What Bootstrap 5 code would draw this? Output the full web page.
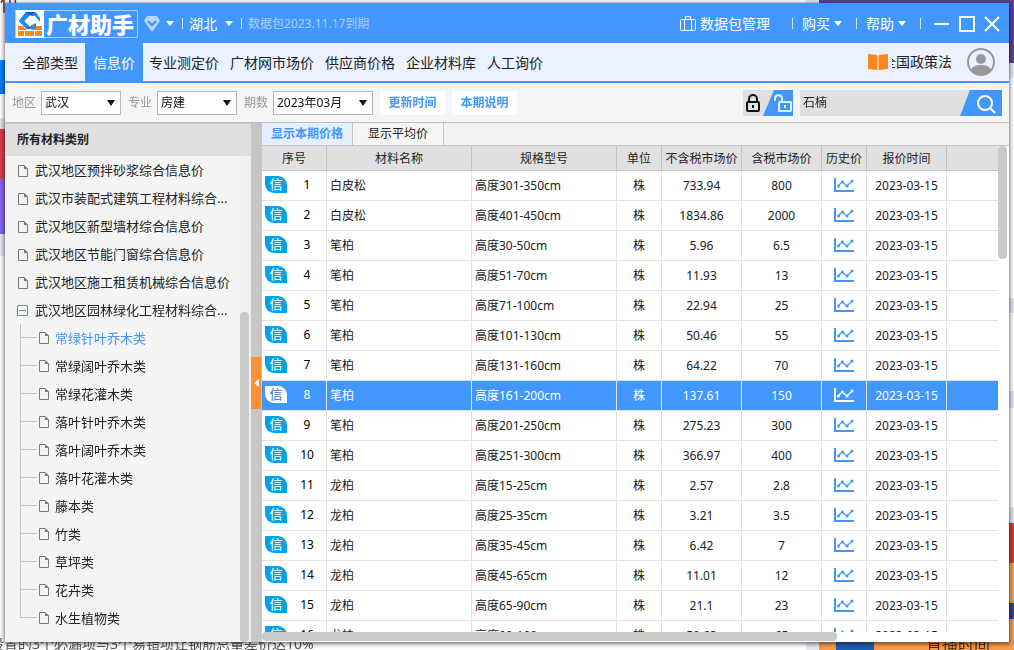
<!DOCTYPE html>
<html lang="zh-CN">
<head>
<meta charset="utf-8">
<meta name="viewport" content="width=device-width, initial-scale=1">
<title>广材助手</title>
<link href="https://cdn.jsdelivr.net/npm/bootstrap@5.3.0/dist/css/bootstrap.min.css" rel="stylesheet">
<script src="https://cdn.jsdelivr.net/npm/bootstrap@5.3.0/dist/js/bootstrap.bundle.min.js"></script>
<style>
:root{--blue:#4297ff;--line:#c4c4c4}
body{font-family:"Noto Sans","Noto Sans CJK SC",sans-serif;font-size:12px;line-height:18px;color:#222;background:#fff}
a{color:inherit;text-decoration:none}
button{border:0;background:none;padding:0;color:inherit}
/* page behind the window */
.desk{position:fixed;inset:0;overflow:hidden;z-index:0}
.desk>*{position:absolute;white-space:nowrap}
.shell{position:relative;z-index:1;height:100vh;padding:3px 5px 8px}
.win{background:#f5f5f5;box-shadow:0 1px 4px 1px rgba(0,0,0,.55)}
.titlebar{height:40px;background:var(--blue);color:#fff;font-size:14px;padding:1px 9px 0 10px}
.logo{height:28px;border:1px solid #a5cdff;font-size:22px;line-height:26px;font-weight:900;padding-right:3px}
.tri{display:inline-block;border:4px solid transparent;border-top:5px solid #fff;border-bottom:0}
.vbar{width:1px;height:11px;background:#d5e7ff}
.titlebar .start{gap:6px}
.titlebar .start .vbar{margin:0 0 0 2px}
.titlebar .end .vbar{margin:0 9px 0 14px}
.expiry{font-size:12px;color:#a9d0ff}
.tabsbar{height:40px;flex:none;background:#ebf1ff;border-bottom:2px solid var(--blue);font-size:14px;padding-left:9px}
.tabsbar .nav{gap:0 11px}
.tabsbar .nav-link{color:#222;padding:2px 0 0;line-height:38px}
.tabsbar .nav-link.active{background:var(--blue);color:#fff;padding:2px 8px 0;margin:0 -5px 0 -4px}
.policy{width:60px}
.avatar{margin:0 14px 0 15px}
.filters{height:39px;flex:none;padding:0 7px}
.filters label{color:#999;width:29px;flex:none}
.filters{column-gap:7px}
.filters label+.form-select{margin-left:-7px}
.filters .form-select{width:80px;border:1px solid #b9b9b9;border-radius:0;height:24px;font-size:12px;line-height:18px;padding:2px 16px 2px 3px;color:#111;background:#fff url("data:image/svg+xml,%3Csvg xmlns='http://www.w3.org/2000/svg' width='8' height='6'%3E%3Cpath d='M0 0h8L4 6z' fill='%23111'/%3E%3C/svg%3E") no-repeat right 5px center;background-size:8px 6px}
.filters .form-select.wide{width:100px}
.lite{background:#fff;color:var(--blue);font-weight:700;height:24px;width:65px}
.filters .lite:hover{background:#e4efff}
.locks{width:50px;height:26px}
.seek{width:202px;height:26px;background:#e0e0e0}
.seek input{border:0;background:none;width:158px;padding:0 3px;color:#222}
.split-body{border-top:1px solid #bdbdbd;min-height:0}
.side{width:246px;flex:none;background:#f4f4f4;border-top:1px solid #d0d0d0}
.side h2{font-size:12px;line-height:32px;font-weight:700;background:#e0e0e0;padding-left:12px;margin:0}
.tree{font-size:13px;line-height:28px;list-style:none;margin:0;padding:0 0 0 12px;white-space:nowrap}
.tree ul{list-style:none;margin:0;padding:0 0 0 3px}
.tree a{display:flex;align-items:center;gap:7px;height:28px}
.tree .leaf{margin:2px 0 0 1px}
.tree ul li{position:relative;padding-left:13px}
.tree ul li::before{content:"";position:absolute;left:0;top:13px;width:17px;border-top:1px solid #c4c4c4}
.tree ul li::after{content:"";position:absolute;left:0;top:0;bottom:0;border-left:1px solid #c4c4c4}
.tree ul li:last-child::after{bottom:14px}
.tree ul a{padding-left:5px;gap:6px}
.tree ul .leaf{margin-top:0}
.tree .on{color:var(--blue)}
.thumb{background:#cacaca;border-radius:4px}
.side .track{width:11px;background:#f0f0f0}
.side .track .thumb{width:9px;margin-top:156px}
.gutter{width:11px;flex:none;background:#c8c6c5}
.gutter button{width:10px;height:52px;background:#ff8f33}
.modes{height:22px;flex:none;background:#f2f2f2}
.modes button{width:91px;border-right:1px solid var(--line);background:#f5f5f5;line-height:22px}
.modes .on{background:#e4efff;color:var(--blue);font-weight:700}
.pane{min-width:0;background:#fff}
.grid-row{min-height:0}
.grid-area{border-top:1px solid var(--line);min-height:0;overflow:hidden}
.sheet{table-layout:fixed;width:100%;border-collapse:separate;border-spacing:0;color:#222}
.sheet th{background:#e0e0e0;font-weight:400;height:25px;padding:2px 0 0;text-align:center;border-right:1px solid var(--line);border-bottom:1px solid var(--line)}
.sheet td{height:30px;padding:0 3px;border-right:1px solid #e2e2e2;border-bottom:1px solid #e2e2e2;text-align:center;white-space:nowrap}
.sheet td.mark-cell{padding:0 0 2px 3px}
.sheet th:last-child,.sheet td:last-child{border-right:0}
.sheet .l{text-align:left}
.sheet .pick td{background:var(--blue);color:#fff}
.c-no{width:65px}.c-name{width:145px}.c-unit{width:45px}.c-price{width:80px}
.xin{width:22px;height:17px;line-height:16px;border-radius:0 9px 0 9px;background:#00a2ed;color:#fff;font-size:13px;display:block;flex:none}
.pick .xin{background:#fff;color:#2b6fc0}
.num{width:40px;color:#000;line-height:18px;flex:none}
.pick .num{color:#fff}
.chart{color:var(--blue);display:block;margin:auto}
.pick .chart{color:#fff}
.vtrack{width:11px;flex:none;border-top:1px solid var(--line)}
.vtrack .thumb{width:9px;height:113px}
.htrack{height:10px;flex:none}
.htrack .thumb{height:9px;width:77%}
</style>
</head>
<body>
<div class="desk" aria-hidden="true">
<span style="left:0;top:-9px;font-size:20px;line-height:26px;color:#5c4033">供</span>
<span style="left:0;top:60px;width:5px;height:34px;background:#0080ff"></span>
<span style="left:0;top:118px;width:5px;height:11px;background:#dfe3e9"></span>
<span style="left:0;top:129px;width:5px;height:105px;background:linear-gradient(#d63e4a 0 50px,#8763f0 50px)"></span>
<span style="left:0;top:234px;width:5px;height:22px;background:#e4e8ee"></span>
<span style="left:-10px;top:634px;font-size:14px;line-height:20px;color:#555">设置的3个必漏项与3个易错项让钢筋总量差价达10%</span>
<span style="left:806px;top:0;width:13px;height:650px;background:#e4e8ef"></span>
<span style="left:819px;top:0;width:195px;height:63px;background:#60408f"></span>
<span style="left:1009px;top:63px;width:5px;height:460px;background:linear-gradient(#e4e8ef 0 15px,#fff 15px 235px,#dfe4ea 235px 250px,#fff 250px 328px,#dfe4ea 328px 345px,#fff 345px 444px,#dfe4ea 444px)"></span>
<span style="left:819px;top:523px;width:195px;height:127px;background:#f69a4b"></span>
<span style="left:1009px;top:523px;width:5px;height:40px;background:#d8382a"></span>
<span style="left:1009px;top:603px;width:5px;height:16px;background:#2b4390"></span>
<span style="left:836px;top:640px;width:38px;height:10px;background:#205cb0"></span>
<span style="left:926px;top:633px;font-size:16px;line-height:22px;color:#4d2c12">直播时间</span>
</div>
<div class="shell">
<div class="win d-flex flex-column h-100 overflow-hidden">
<header class="titlebar d-flex align-items-center justify-content-between flex-shrink-0">
<div class="start d-flex align-items-center">
<div class="logo d-flex align-items-center">
<svg width="30" height="28" viewBox="0 0 30 28" class="flex-shrink-0"><path fill="#fff" d="M0 0h28v28H0z"/><path fill="#ff861a" d="M2 16h5l4 4H2zm15 0h9v4H15zM2 21h6v5H2zm7 0h9v5H9zm10 0h7v5h-7z"/><path fill="#0b59b4" d="M10 2h9l3 3h-8l-6 6 8 8h-5L3 11z"/><path fill="#168ef0" d="M10 2l-7 9 8 8 2-2-5-6 6-6zM19 2l5 6v4l-5-6h-5zM14 16l6-3v6h-6z"/></svg>广材助手</div>
<svg width="16" height="16" viewBox="0 0 16 16"><path d="M3 0h10l3 5-8 11L0 5z" fill="#b5d6ff"/><path d="M4 5l4 4 4-4" fill="none" stroke="#4297ff" stroke-width="2.4"/></svg>
<span class="tri"></span><span class="vbar"></span>
<button class="d-flex align-items-center gap-2">湖北<span class="tri"></span></button>
<span class="vbar"></span><span class="expiry">数据包2023.11.17到期</span>
</div>
<div class="end d-flex align-items-center">
<button class="d-flex align-items-center gap-1 me-2"><svg width="16" height="15" viewBox="0 0 16 15" fill="none" stroke="#fff"><rect x=".5" y="3.5" width="15" height="11" rx="1"/><path d="M4.500 14V3.500M11.500 14V3.500M5.500 3.500v-3h5v3"/></svg>数据包管理</button>
<span class="vbar"></span><button class="d-flex align-items-center gap-1">购买<span class="tri"></span></button>
<span class="vbar"></span><button class="d-flex align-items-center gap-1">帮助<span class="tri"></span></button>
<span class="vbar"></span>
<button aria-label="窗口" class="d-flex ms-1"><svg width="66" height="18" viewBox="0 0 66 18" fill="none" stroke="#fff" stroke-width="2"><path d="M0 9h15M51 2l14 14M65 2L51 16"/><rect x="26" y="2" width="14" height="14"/></svg></button>
</div>
</header>
<nav class="tabsbar d-flex align-items-center">
<div class="nav flex-nowrap ms-2">
<a class="nav-link" href="#">全部类型</a><a class="nav-link active" href="#">信息价</a><a class="nav-link" href="#">专业测定价</a><a class="nav-link" href="#">广材网市场价</a><a class="nav-link" href="#">供应商价格</a><a class="nav-link" href="#">企业材料库</a><a class="nav-link" href="#">人工询价</a>
</div>
<a href="#" class="ms-auto d-flex align-items-center"><svg width="20" height="18" viewBox="0 0 20 18" class="me-1"><path fill="#ff861a" d="M0 1l9 1v15l-9-1zM20 1l-9 1v15l9-1z"/><path fill="#ffc48c" d="M9 2h2v15H9z"/></svg><span class="policy d-flex justify-content-end overflow-hidden text-nowrap">全国政策法</span></a>
<button aria-label="用户" class="avatar d-flex"><svg width="28" height="28" viewBox="0 0 28 28"><circle cx="14" cy="14" r="13" fill="#ebf1ff" stroke="#999" stroke-width="2"/><circle cx="14" cy="11" r="5" fill="#999"/><path fill="#999" d="M4 22c1-4 6-5 10-5s9 1 10 5c-5 7-15 7-20 0z"/></svg></button>
</nav>
<form class="filters d-flex align-items-center">
<label for="area">地区</label><select id="area" class="form-select"><option>武汉</option></select>
<label for="major">专业</label><select id="major" class="form-select"><option>房建</option></select>
<label for="term">期数</label><select id="term" class="form-select wide"><option>2023年03月</option></select>
<button type="button" class="lite">更新时间</button><button type="button" class="lite">本期说明</button>
<button type="button" aria-label="锁定" class="locks ms-auto"><svg width="50" height="26" viewBox="0 0 50 26" class="d-block"><path fill="#e0e0e0" d="M0 0h50v26H0z"/><path fill="#4297ff" d="M31 0h19v26H20z"/><g fill="none" stroke="#111" stroke-width="2"><rect x="4" y="12" width="12" height="9" rx="1"/><path d="M6 12V9a4 4 0 0 1 8 0v3M10 15v3"/></g><g fill="none" stroke="#e6f1ff" stroke-width="2"><rect x="36" y="12" width="12" height="9" rx="1"/><path d="M39 12V9c0-5-7-5-7 0v2M42 15v3"/></g></svg></button>
<div class="seek d-flex"><input type="text" aria-label="搜索" value="石楠"><button type="button" aria-label="查找" class="ms-auto"><svg width="42" height="26" viewBox="0 0 42 26" class="d-block"><path fill="#4297ff" d="M10 0h32v26H0z"/><circle cx="25" cy="13" r="7" fill="none" stroke="#fff" stroke-width="2"/><path d="M30 18l5 5" stroke="#fff" stroke-width="2"/></svg></button></div>
</form>
<main class="split-body d-flex flex-fill">
<aside class="side d-flex flex-column">
<h2>所有材料类别</h2>
<div class="d-flex flex-fill"><ul class="tree flex-fill" id="tree"></ul><div class="track d-flex"><div class="thumb"></div></div></div>
</aside>
<div class="gutter d-flex align-items-center"><button aria-label="收起"><svg width="5" height="8" viewBox="0 0 5 8" class="d-block mx-auto"><path fill="#fff" d="M5 0v8L0 4z"/></svg></button></div>
<section class="pane d-flex flex-column flex-fill">
<div class="modes d-flex"><button class="on">显示本期价格</button><button>显示平均价</button></div>
<div class="grid-row d-flex flex-fill">
<div class="grid-area flex-fill"><table class="sheet">
<colgroup><col class="c-no"><col class="c-name"><col class="c-name"><col class="c-unit"><col class="c-price"><col class="c-price"><col class="c-unit"><col class="c-price"><col></colgroup>
<thead><tr><th>序号</th><th>材料名称</th><th>规格型号</th><th>单位</th><th>不含税市场价</th><th>含税市场价</th><th>历史价</th><th>报价时间</th><th></th></tr></thead>
<tbody id="rows"></tbody></table></div>
<div class="vtrack"><div class="thumb"></div></div>
</div>
<div class="htrack"><div class="thumb"></div></div>
</section>
</main>
</div>
</div>
<script>
const page='<svg width="10" height="12" viewBox="0 0 10 12" fill="none" stroke="#777" class="leaf flex-shrink-0"><path d="M.5.5h5.500l3.500 3.500v7.500H.5z"/><path d="M6 0v4h4z" fill="#777" stroke="none"/></svg>';
const fold='<svg width="11" height="11" viewBox="0 0 11 11" fill="none" class="flex-shrink-0"><path d="M.5.5h10v10H.5z" stroke="#888"/><path d="M2 5.500h7" stroke="#2ab0e0"/></svg>';
const groups=['武汉地区预拌砂浆综合信息价','武汉市装配式建筑工程材料综合...','武汉地区新型墙材综合信息价','武汉地区节能门窗综合信息价','武汉地区施工租赁机械综合信息价'];
const kids=['常绿针叶乔木类','常绿阔叶乔木类','常绿花灌木类','落叶针叶乔木类','落叶阔叶乔木类','落叶花灌木类','藤本类','竹类','草坪类','花卉类','水生植物类'];
document.getElementById('tree').innerHTML=groups.map(t=>`<li><a href="#">${page}${t}</a></li>`).join('')+
`<li><a href="#">${fold}武汉地区园林绿化工程材料综合...</a><ul>`+kids.map((t,i)=>`<li><a href="#" class="${i?'':'on'}">${page}${t}</a></li>`).join('')+'</ul></li>';
const data=[['白皮松','301-350','733.94','800'],['白皮松','401-450','1834.86','2000'],['笔柏','30-50','5.96','6.5'],['笔柏','51-70','11.93','13'],['笔柏','71-100','22.94','25'],['笔柏','101-130','50.46','55'],['笔柏','131-160','64.22','70'],['笔柏','161-200','137.61','150'],['笔柏','201-250','275.23','300'],['笔柏','251-300','366.97','400'],['龙柏','15-25','2.57','2.8'],['龙柏','25-35','3.21','3.5'],['龙柏','35-45','6.42','7'],['龙柏','45-65','11.01','12'],['龙柏','65-90','21.1','23'],['龙柏','90-100','59.63','65']];
const chart='<svg class="chart" width="20" height="15" viewBox="0 0 20 15" fill="none" stroke="currentColor"><path d="M1 0v13h19" stroke-width="2"/><path d="M4 8l4-4 5 4 5-5" stroke-width="1.300"/><g fill="currentColor" stroke="none"><circle cx="4.500" cy="8" r="1.500"/><circle cx="8.500" cy="4" r="1.500"/><circle cx="13" cy="8" r="1.500"/><circle cx="18" cy="3" r="1.500"/></g></svg>';
document.getElementById('rows').innerHTML=data.map((r,i)=>`<tr class="${i==7?'pick':''}"><td class="mark-cell"><div class="d-flex align-items-center"><span class="xin">信</span><span class="num">${i+1}</span></div></td><td class="l">${r[0]}</td><td class="l">高度${r[1]}cm</td><td>株</td><td>${r[2]}</td><td>${r[3]}</td><td>${chart}</td><td>2023-03-15</td><td></td></tr>`).join('');
</script>
</body>
</html>
